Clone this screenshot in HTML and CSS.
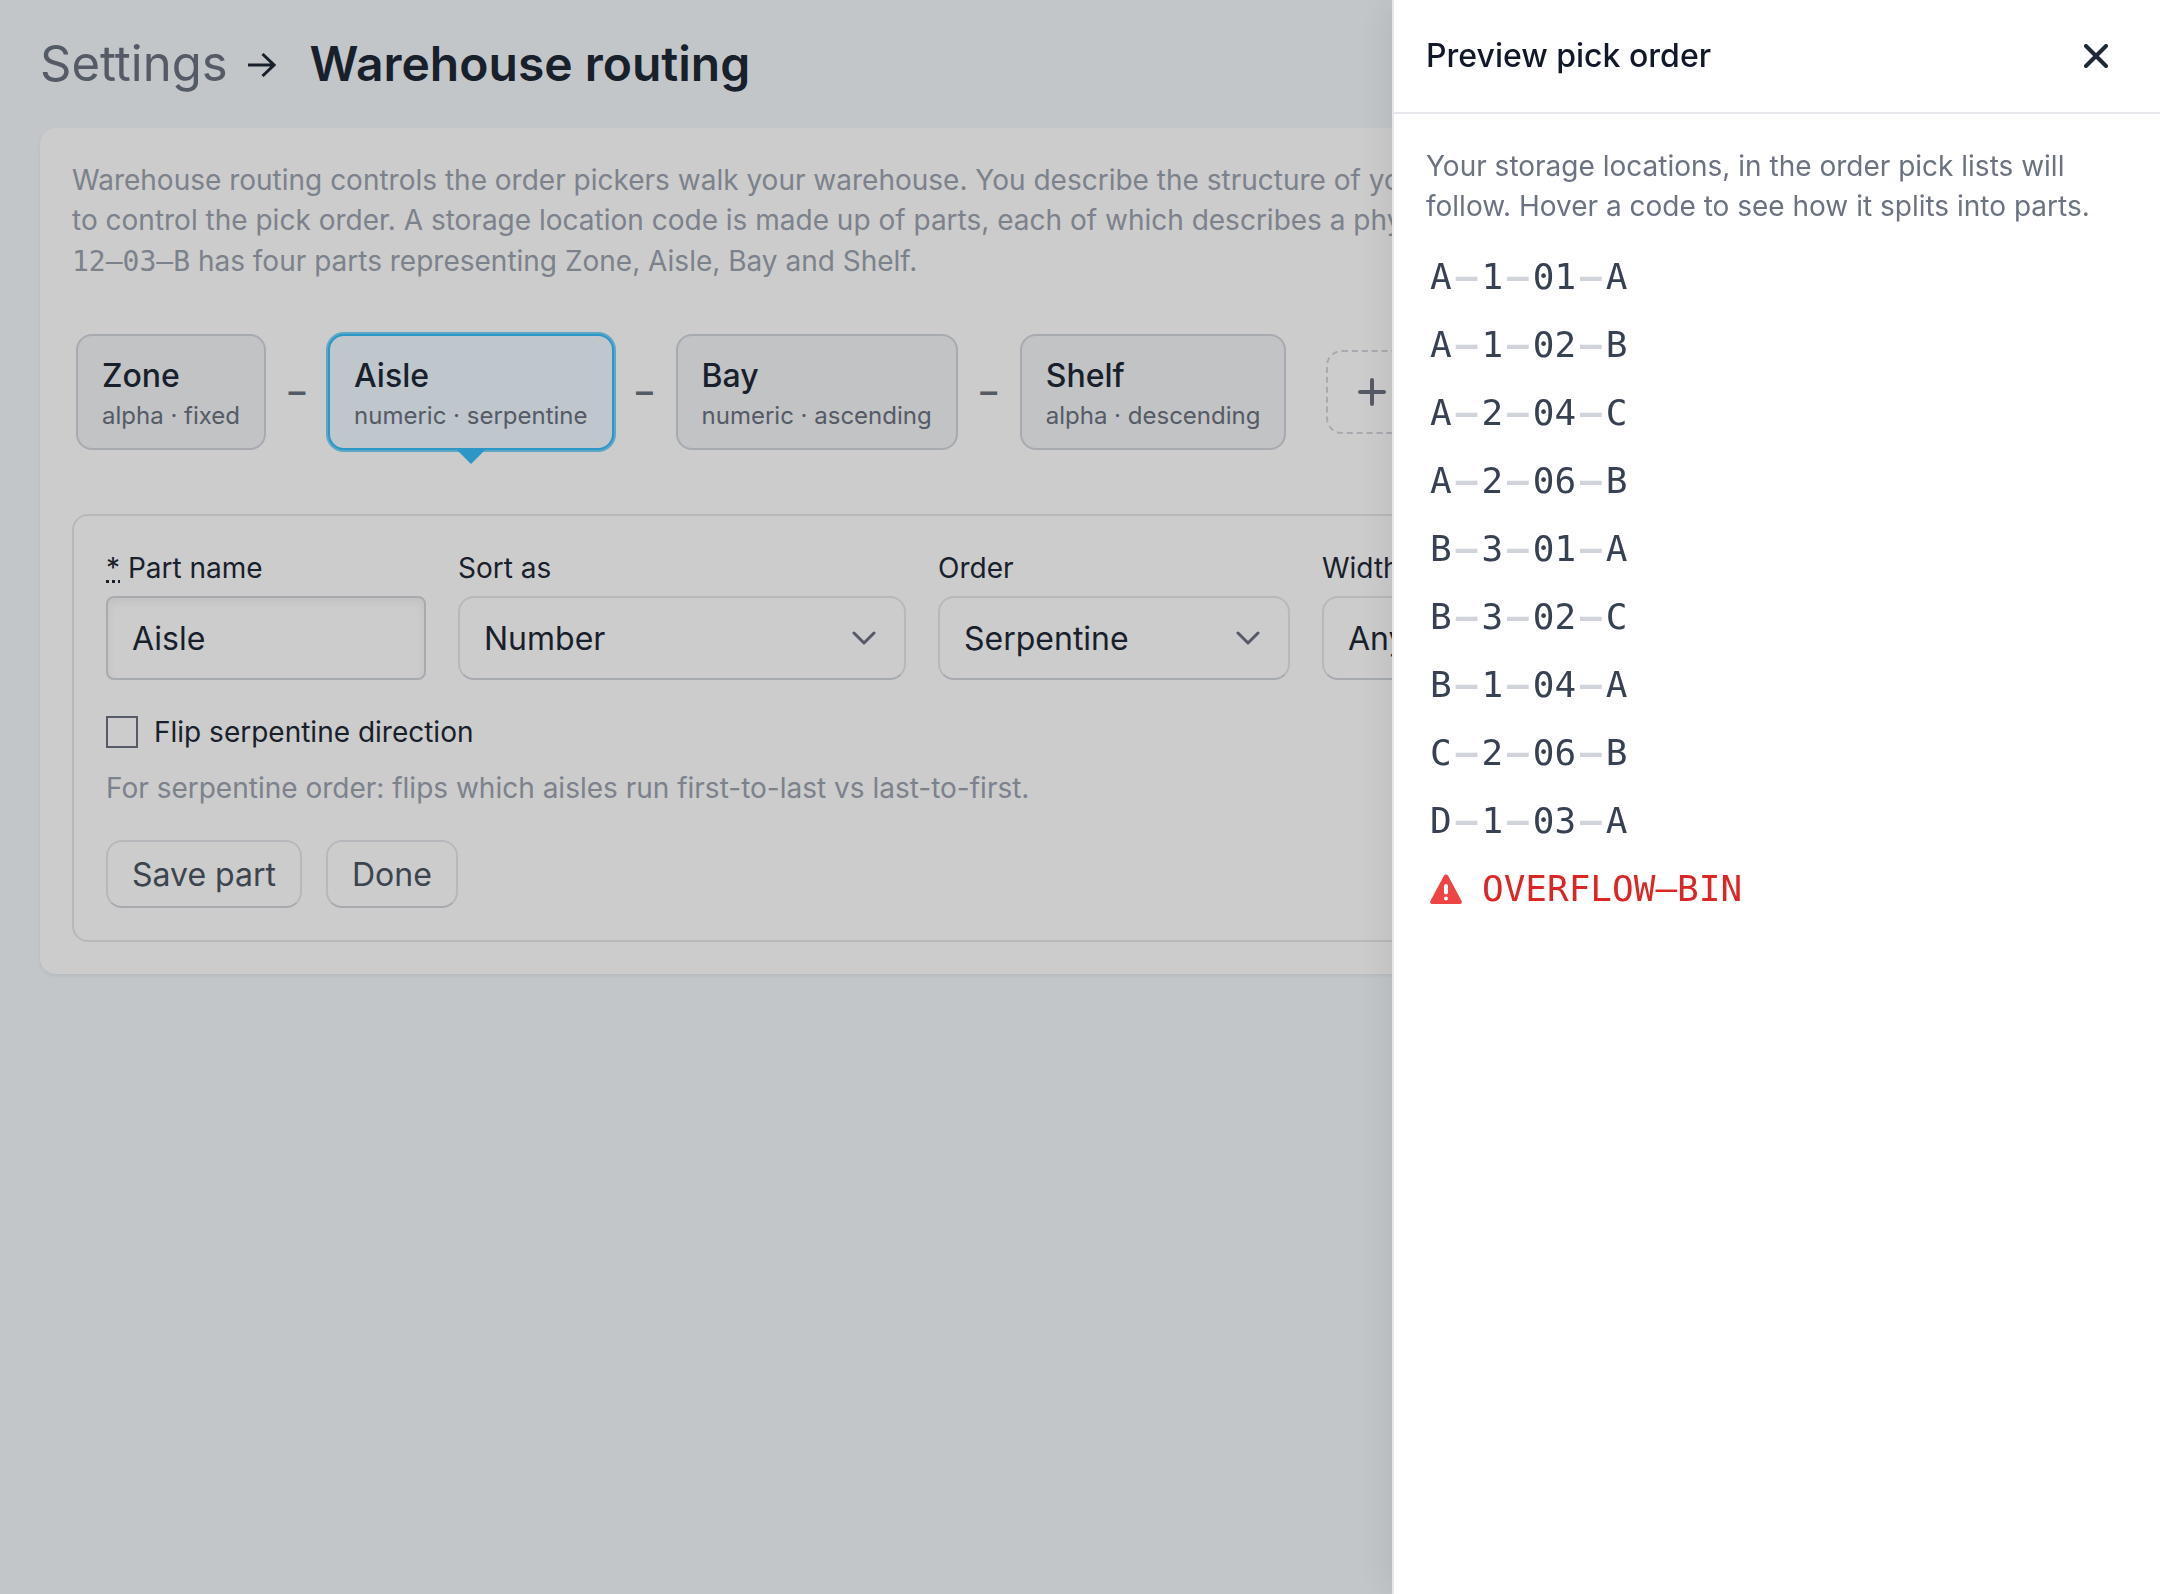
FILE: index.html
```html
<!DOCTYPE html>
<html lang="en">
<head>
    <meta charset="UTF-8">
    <meta name="viewport" content="width=device-width, initial-scale=1.0">
    <title>Warehouse routing</title>
    <link rel="stylesheet" href="styles.css">
</head>
<body>
    <div class="wrapper">
        <header class="page-header">
            <a href="#">Settings</a>
            <svg class="arrow" viewBox="0 0 28 24" aria-hidden="true"><path d="M0 12h26M14.500 1l11.500 11-11.500 11"/></svg>
            <h1>Warehouse routing</h1>
        </header>
        <main class="card">
            <p class="intro">Warehouse routing controls the order pickers walk your warehouse. You describe the structure of your location codes<br>
                to control the pick order. A storage location code is made up of parts, each of which describes a physical place, so <code>A–<br>12–03–B</code> has four parts representing Zone, Aisle, Bay and Shelf.</p>

            <div class="parts">
                <button type="button" class="part"><strong>Zone</strong><span>alpha · fixed</span></button>
                <span class="sep">–</span>
                <button type="button" class="part active"><strong>Aisle</strong><span>numeric · serpentine</span></button>
                <span class="sep">–</span>
                <button type="button" class="part"><strong>Bay</strong><span>numeric · ascending</span></button>
                <span class="sep">–</span>
                <button type="button" class="part"><strong>Shelf</strong><span>alpha · descending</span></button>
                <button type="button" class="add-part" aria-label="Add part">
                    <svg viewBox="0 0 28 28" aria-hidden="true"><path d="M14 2v24M2 14h24"/></svg>
                </button>
            </div>

            <form class="part-form">
                <div class="fields">
                    <div class="field name">
                        <label for="part-name"><abbr title="required">*</abbr> Part name</label>
                        <input type="text" id="part-name" value="Aisle">
                    </div>
                    <div class="field sort">
                        <label for="sort-as">Sort as</label>
                        <div class="select">
                            <select id="sort-as"><option>Number</option></select>
                            <svg viewBox="0 0 24 14" aria-hidden="true"><path d="M2 2l10 10L22 2"/></svg>
                        </div>
                    </div>
                    <div class="field order">
                        <label for="order">Order</label>
                        <div class="select">
                            <select id="order"><option>Serpentine</option></select>
                            <svg viewBox="0 0 24 14" aria-hidden="true"><path d="M2 2l10 10L22 2"/></svg>
                        </div>
                    </div>
                    <div class="field width">
                        <label for="width">Width</label>
                        <div class="select">
                            <select id="width"><option>Any</option></select>
                            <svg viewBox="0 0 24 14" aria-hidden="true"><path d="M2 2l10 10L22 2"/></svg>
                        </div>
                    </div>
                </div>
                <div class="check">
                    <input type="checkbox" id="flip">
                    <label for="flip">Flip serpentine direction</label>
                </div>
                <p class="hint">For serpentine order: flips which aisles run first-to-last vs last-to-first.</p>
                <div class="buttons">
                    <button type="button">Save part</button>
                    <button type="button">Done</button>
                </div>
            </form>
        </main>
    </div>

    <div class="overlay"></div>

    <aside class="drawer">
        <header>
            <h2>Preview pick order</h2>
            <button type="button" aria-label="Close">
                <svg viewBox="0 0 24 24" aria-hidden="true"><path d="M2 2l20 20M22 2L2 22"/></svg>
            </button>
        </header>
        <div class="drawer-body">
            <p>Your storage locations, in the order pick lists will follow. Hover a code to see how it splits into parts.</p>
            <ul class="codes">
                <li><span>A</span><i>–</i><span>1</span><i>–</i><span>01</span><i>–</i><span>A</span></li>
                <li><span>A</span><i>–</i><span>1</span><i>–</i><span>02</span><i>–</i><span>B</span></li>
                <li><span>A</span><i>–</i><span>2</span><i>–</i><span>04</span><i>–</i><span>C</span></li>
                <li><span>A</span><i>–</i><span>2</span><i>–</i><span>06</span><i>–</i><span>B</span></li>
                <li><span>B</span><i>–</i><span>3</span><i>–</i><span>01</span><i>–</i><span>A</span></li>
                <li><span>B</span><i>–</i><span>3</span><i>–</i><span>02</span><i>–</i><span>C</span></li>
                <li><span>B</span><i>–</i><span>1</span><i>–</i><span>04</span><i>–</i><span>A</span></li>
                <li><span>C</span><i>–</i><span>2</span><i>–</i><span>06</span><i>–</i><span>B</span></li>
                <li><span>D</span><i>–</i><span>1</span><i>–</i><span>03</span><i>–</i><span>A</span></li>
                <li class="unmatched">
                    <svg viewBox="0 0 32 30" aria-hidden="true">
                        <path class="triangle" d="M14 1.500a2.400 2.400 0 0 1 4 0L31.600 27a2 2 0 0 1-1.700 3H2.100a2 2 0 0 1-1.700-3z"/>
                        <path class="mark" d="M16 12v6.500M16 24.500v.1"/>
                    </svg>
                    <span>OVERFLOW–BIN</span>
                </li>
            </ul>
        </div>
    </aside>
</body>
</html>
```
FILE: styles.css
```css
*{box-sizing: border-box;}
body{
    margin: 0;
    background-color: #f4f8fb;
    color: #1f2937;
    font-family: Inter, "Liberation Sans", sans-serif;
    font-size: 28px;
    line-height: 40px;
}
h1, h2, p{margin: 0;}
ul{list-style: none; margin: 0; padding: 0;}
a{text-decoration: none; color: #6b7280;}
button, input, select{
    margin: 0;
    font-family: inherit;
    font-size: 32px;
    color: inherit;
}
svg{
    display: block;
    fill: none;
    stroke: currentColor;
    stroke-linecap: round;
    stroke-linejoin: round;
}

.wrapper{padding: 32px 40px;}
.page-header{
    display: flex;
    align-items: center;
    height: 64px;
    margin-bottom: 32px;
    font-size: 49px;
    line-height: 64px;
}
.page-header h1{
    font-size: 48px;
    font-weight: 620;
}
.page-header .arrow{
    width: 28px;
    height: 24px;
    margin: 2px 34px 0 20px;
    stroke-width: 3;
    stroke-linecap: butt;
    stroke-linejoin: miter;
}

.card{
    padding: 32px;
    border-radius: 16px;
    background-color: #fff;
    box-shadow: 0 2px 4px rgba(0, 0, 0, .06);
}
.intro{color: #9ca3af;}
.intro code{font-family: "DejaVu Sans Mono", monospace; font-size: 28px;}

.parts{
    display: flex;
    align-items: center;
    padding: 4px;
    margin: 48px 0 60px;
}
.part{
    position: relative;
    flex: none;
    padding: 16px 24px;
    border: 2px solid #d1d5db;
    border-radius: 16px;
    background-color: #f3f4f6;
    text-align: left;
}
.part strong{
    display: block;
    font-weight: 500;
    line-height: 48px;
}
.part span{
    display: block;
    color: #6b7280;
    font-size: 24px;
    line-height: 32px;
}
.part.active{
    border-color: #38bdf8;
    background-color: #eff8ff;
    box-shadow: 0 0 0 2px rgba(56, 189, 248, .7);
}
/* pointer down to the form of the selected part */
.part.active::after{
    content: "";
    position: absolute;
    top: 100%;
    left: 50%;
    margin-left: -16px;
    border: 16px solid transparent;
    border-top-color: #38bdf8;
    border-bottom: 0;
}
.parts .sep{
    flex: none;
    width: 62px;
    color: #6b7280;
    font-family: "DejaVu Sans Mono", monospace;
    font-weight: 700;
    text-align: center;
}
.add-part{
    display: flex;
    align-items: center;
    justify-content: center;
    flex: none;
    width: 92px;
    height: 84px;
    margin-left: 40px;
    border: 2px dashed #d1d5db;
    border-radius: 16px;
    background-color: transparent;
    color: #6b7280;
}
.add-part svg{
    width: 28px;
    height: 28px;
    stroke-width: 4;
}

.part-form{
    padding: 32px;
    border: 2px solid #e5e7eb;
    border-radius: 16px;
}
.fields{
    display: flex;
    gap: 32px;
    margin-bottom: 32px;
}
.field label{
    display: block;
    margin-bottom: 8px;
}
.field.name{width: 320px;}
.field.sort{width: 448px;}
.field.order{width: 352px;}
.field.width{width: 352px;}
.field input, .field select{
    display: block;
    width: 100%;
    height: 84px;
    padding: 0 24px;
    border: 2px solid #d1d5db;
    border-radius: 8px;
    background-color: #fff;
}
.field input{box-shadow: inset 0 4px 8px rgba(0, 0, 0, .06);}
.field select{
    appearance: none;
    border-color: #e5e7eb;
    border-bottom-color: #d1d5db;
    border-radius: 16px;
}
.select{position: relative;}
.select svg{
    position: absolute;
    top: 35px;
    right: 30px;
    width: 24px;
    height: 14px;
    color: #6b7280;
    stroke-width: 3;
    pointer-events: none;
}

.check{
    display: flex;
    align-items: center;
    gap: 16px;
    margin-bottom: 16px;
}
.check input{
    appearance: none;
    width: 32px;
    height: 32px;
    border: 2px solid #6b7280;
    background-color: #fff;
}
.hint{
    margin-bottom: 32px;
    color: #9ca3af;
}
.buttons{
    display: flex;
    gap: 24px;
}
.buttons button{
    height: 68px;
    padding: 0 24px;
    border: 2px solid #e5e7eb;
    border-bottom-color: #d1d5db;
    border-radius: 16px;
    background-color: #fff;
    color: #4b5563;
}

.overlay{
    position: fixed;
    inset: 0;
    background-color: rgba(0, 0, 0, .2);
}
.drawer{
    position: fixed;
    top: 0;
    right: 0;
    bottom: 0;
    width: 768px;
    border-left: 2px solid #e5e7eb;
    background-color: #fff;
    box-shadow: 0 0 40px rgba(0, 0, 0, .1);
}
.drawer>header{
    display: flex;
    align-items: center;
    justify-content: space-between;
    height: 114px;
    padding: 0 32px;
    border-bottom: 2px solid #e5e7eb;
}
.drawer>header h2{
    color: #111827;
    font-size: 32px;
    font-weight: 500;
}
.drawer>header button{
    padding: 20px;
    border: 0;
    background-color: transparent;
}
.drawer>header svg{
    width: 24px;
    height: 24px;
    stroke-width: 4;
}
.drawer-body{padding: 32px;}
.drawer-body p{
    margin-bottom: 17px;
    color: #6b7280;
}
.codes{
    color: #374151;
    font-family: "DejaVu Sans Mono", monospace;
    font-size: 36px;
    line-height: 68px;
}
.codes li{
    display: flex;
    align-items: center;
}
.codes span{padding: 0 4px;}
.codes i{
    color: #d1d5db;
    font-style: normal;
    font-weight: 700;
}
.codes .unmatched{color: #dc2626;}
.unmatched svg{
    width: 32px;
    height: 30px;
    margin: 0 16px 0 4px;
}
.unmatched .triangle{
    fill: #ef4444;
    stroke: none;
}
.unmatched .mark{
    stroke: #fff;
    stroke-width: 4;
}
```
